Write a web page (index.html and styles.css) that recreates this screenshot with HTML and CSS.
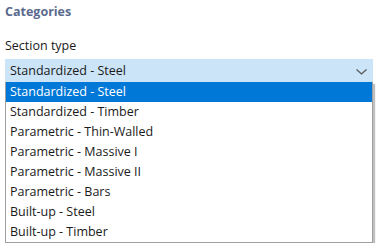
FILE: index.html
```html
<!DOCTYPE html>
<html>
  <head>
    <meta charset="UTF-8" />
    <title>Categories</title>
    <meta name="viewport" content="width=device-width, initial-scale=1.0" />
    <link rel="stylesheet" href="styles.css">
  </head>
  <body>
    <div class="panel">
      <h2 class="titulo">Categories</h2>
      <label class="rotulo">Section type</label>
      <div class="combo">
        <div class="combo-valor">
          <span>Standardized - Steel</span>
          <svg class="seta" width="11" height="6" viewBox="0 0 11 6">
            <path d="M0.5 0.5 L5.5 5 L10.5 0.5" fill="none" stroke="#555" stroke-width="1.2" />
          </svg>
        </div>
        <ul class="lista">
          <li class="selecionado">Standardized - Steel</li>
          <li>Standardized - Timber</li>
          <li>Parametric - Thin-Walled</li>
          <li>Parametric - Massive I</li>
          <li>Parametric - Massive II</li>
          <li>Parametric - Bars</li>
          <li>Built-up - Steel</li>
          <li>Built-up - Timber</li>
        </ul>
      </div>
    </div>
  </body>
</html>
```

FILE: styles.css
```css
body {
  margin: 0;
  background: white;
  font-family: "Open Sans", "Noto Sans", sans-serif;
  color: #1a1a1a;
}
.panel {
  padding: 3px 5px 0 5px;
}
.titulo {
  margin: 0;
  font-size: 12.5px;
  font-weight: bold;
  color: #5a6a8e;
  line-height: 18px;
}
.rotulo {
  display: block;
  margin-top: 16px;
  font-size: 12.5px;
  line-height: 18px;
}
.combo {
  margin-top: 4px;
  width: 368px;
}
.combo-valor {
  height: 23px;
  background: #cce4f7;
  display: flex;
  align-items: center;
  justify-content: space-between;
  padding: 0 6px 0 5px;
  font-size: 12.5px;
}
.seta {
  margin-top: 2px;
}
.lista {
  list-style: none;
  margin: 0;
  padding: 0;
  width: 366px;
  border: 1px solid #a0a0a0;
  border-top: none;
  box-shadow: 2px 2px 1px rgba(0, 0, 0, 0.25);
}
.lista li {
  height: 20px;
  line-height: 20px;
  padding-left: 4px;
  font-size: 12.5px;
}
.lista .selecionado {
  background: #0078d7;
  color: white;
}
```
